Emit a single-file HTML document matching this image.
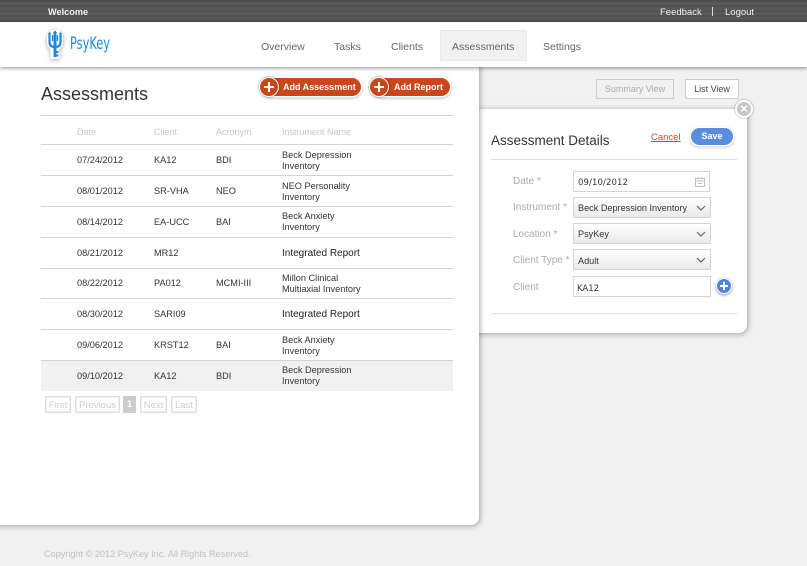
<!DOCTYPE html>
<html><head><meta charset="utf-8"><style>
html,body{margin:0;padding:0}
body{width:807px;height:566px;overflow:hidden;background:#f1f1f1;font-family:"Liberation Sans",sans-serif;position:relative}
.a{position:absolute;white-space:nowrap}
#top{left:0;top:0;width:807px;height:22px;background:repeating-linear-gradient(180deg,#505050 0,#505050 2px,#595959 2px,#595959 5px)}
#nav{left:0;top:22px;width:807px;height:45px;background:#fff;box-shadow:0 1px 4px rgba(0,0,0,.45);z-index:5}
.n{font-size:10.500px;color:#666;top:41px;line-height:13px;z-index:6}
.t{font-size:9.500px;line-height:11px;color:#f0f0f0;top:7px}
#main{left:-10px;top:60px;width:489px;height:465px;background:#fff;border-radius:0 0 8px 0;box-shadow:1px 1px 6px rgba(0,0,0,.35);z-index:3}
#det{left:470px;top:109px;width:277px;height:224px;background:#fff;border-radius:0 0 8px 0;box-shadow:1px 1px 6px rgba(0,0,0,.35);z-index:2}
.l{background:#d4d4d4;height:1px;left:41px;width:412px;z-index:4}
.c{font-size:9.200px;line-height:10.500px;color:#333;z-index:4}
.r{font-size:10px;color:#222}
.h{font-size:9px;line-height:11px;color:#c6c6c6;top:127px;z-index:4}
.b{height:18px;border-radius:9px;background:#c9471a;color:#fff;font-weight:bold;font-size:9px;line-height:18px;top:78px;z-index:4;box-shadow:0 0 0 1.500px #fff,0 1px 3px 1px rgba(0,0,0,.35)}
.o{width:18px;height:18px;border-radius:50%;background:#c9471a;border:1.500px solid #fff;top:77px;z-index:4;color:#fff;box-shadow:0 0 2px rgba(0,0,0,.5)}
.o:before{content:"";position:absolute;left:4px;top:8px;width:10px;height:2px;background:#fff}
.o:after{content:"";position:absolute;left:8px;top:4px;width:2px;height:10px;background:#fff}
.p{box-sizing:border-box;font-size:9.500px;line-height:17px;height:17px;border:1px solid #ddd;box-shadow:inset 0 0 0 1px #f0f0f0;color:#ccc;top:396px;z-index:4;text-align:center}
.f{font-size:10px;line-height:12px;color:#aaa;left:513px;z-index:4}
.s{left:573px;width:135px;height:19px;border:1px solid #d5d5d5;background:linear-gradient(#fff,#e9e9e9);z-index:4;font-size:9.150px;line-height:21px;color:#333;padding-left:4px;border-radius:1px}
.s svg{position:absolute;right:3px;top:4px}
.i{background:#fff}
</style></head><body>
<div class="a" id="top"></div>
<div class="a t" style="left:48px;font-weight:bold;font-size:9.200px">Welcome</div>
<div class="a t" style="left:660px">Feedback</div>
<div class="a" style="left:712px;top:7px;width:1px;height:9px;background:#ddd"></div>
<div class="a t" style="left:725px">Logout</div>
<div class="a" id="nav"></div>
<svg class="a" style="left:44px;top:29px;z-index:6;filter:drop-shadow(0 1px 2px rgba(0,0,0,.35))" width="22" height="32" viewBox="0 0 22 32"><path d="M11 1 L11 30" stroke="#fff" stroke-width="9"/><path d="M3 13 Q3 21 11 21 Q19 21 19 13 L19 5 L3 5Z" fill="#fff"/><path d="M5.500 4 L5.500 13 Q5.500 18 11 18 Q16.500 18 16.500 13 L16.500 4" fill="none" stroke="#1e88e0" stroke-width="2.200"/><path d="M8.500 6 L8.500 12 M13.500 6 L13.500 12" fill="none" stroke="#1e88e0" stroke-width="1.300"/><path d="M9 3.500 L11 1.500 L13 3.500Z M4 5 L5.500 3 L7 5Z M15 5 L16.500 3 L18 5Z" fill="#1e88e0"/><rect x="9.500" y="3" width="3" height="25" fill="#1e88e0"/><rect x="12" y="22" width="2.500" height="2" fill="#1e88e0"/><rect x="12" y="25.500" width="2.500" height="2" fill="#1e88e0"/></svg>
<div class="a" style="left:70px;top:34px;z-index:6;font-size:17px;line-height:20px;color:#2288dd;transform:scaleX(.67);transform-origin:0 0;font-family:'DejaVu Sans',sans-serif">PsyKey</div>
<div class="a" style="left:440px;top:30px;width:85px;height:29px;background:#f1f1f1;border:1px solid #e8e8e8;z-index:6"></div>
<div class="a n" style="left:261px">Overview</div>
<div class="a n" style="left:334px">Tasks</div>
<div class="a n" style="left:391px">Clients</div>
<div class="a n" style="left:452px">Assessments</div>
<div class="a n" style="left:543px">Settings</div>

<div class="a" id="main"></div>
<div class="a" style="left:41px;top:82px;font-size:18px;line-height:24px;color:#333;z-index:4">Assessments</div>
<div class="a b" style="left:262px;width:77px;padding-left:22px;text-indent:-1px">Add Assessment</div>
<div class="a o" style="left:259px"></div>
<div class="a b" style="left:372px;width:54px;padding-left:24px;text-indent:-2px">Add Report</div>
<div class="a o" style="left:369px"></div>

<div class="a l" style="top:115px"></div>
<div class="a h" style="left:77px">Date</div><div class="a h" style="left:154px">Client</div><div class="a h" style="left:216px">Acronym</div><div class="a h" style="left:282px">Instrument Name</div>
<div class="a l" style="top:144px"></div><div class="a l" style="top:175px"></div><div class="a l" style="top:206px"></div><div class="a l" style="top:237px"></div><div class="a l" style="top:268px"></div><div class="a l" style="top:298px"></div><div class="a l" style="top:329px"></div><div class="a l" style="top:360px"></div>
<div class="a" style="left:41px;top:361px;width:412px;height:30px;background:#f1f1f1;z-index:3"></div>

<div class="a c" style="left:77px;top:155px">07/24/2012</div><div class="a c" style="left:154px;top:155px">KA12</div><div class="a c" style="left:216px;top:155px">BDI</div><div class="a c" style="left:282px;top:150px">Beck Depression<br>Inventory</div>
<div class="a c" style="left:77px;top:186px">08/01/2012</div><div class="a c" style="left:154px;top:186px">SR-VHA</div><div class="a c" style="left:216px;top:186px">NEO</div><div class="a c" style="left:282px;top:181px">NEO Personality<br>Inventory</div>
<div class="a c" style="left:77px;top:217px">08/14/2012</div><div class="a c" style="left:154px;top:217px">EA-UCC</div><div class="a c" style="left:216px;top:217px">BAI</div><div class="a c" style="left:282px;top:211px">Beck Anxiety<br>Inventory</div>
<div class="a c" style="left:77px;top:248px">08/21/2012</div><div class="a c" style="left:154px;top:248px">MR12</div><div class="a c r" style="left:282px;top:249px">Integrated Report</div>
<div class="a c" style="left:77px;top:278px">08/22/2012</div><div class="a c" style="left:154px;top:278px">PA012</div><div class="a c" style="left:216px;top:278px">MCMI-III</div><div class="a c" style="left:282px;top:273px">Millon Clinical<br>Multiaxial Inventory</div>
<div class="a c" style="left:77px;top:309px">08/30/2012</div><div class="a c" style="left:154px;top:309px">SARI09</div><div class="a c r" style="left:282px;top:310px">Integrated Report</div>
<div class="a c" style="left:77px;top:340px">09/06/2012</div><div class="a c" style="left:154px;top:340px">KRST12</div><div class="a c" style="left:216px;top:340px">BAI</div><div class="a c" style="left:282px;top:335px">Beck Anxiety<br>Inventory</div>
<div class="a c" style="left:77px;top:371px">09/10/2012</div><div class="a c" style="left:154px;top:371px">KA12</div><div class="a c" style="left:216px;top:371px">BDI</div><div class="a c" style="left:282px;top:365px">Beck Depression<br>Inventory</div>

<div class="a p" style="left:45px;width:26px">First</div>
<div class="a p" style="left:75px;width:45px">Previous</div>
<div class="a p" style="left:123px;width:13px;background:#ccc;color:#fff;border:0;box-shadow:none;font-weight:bold;line-height:18px">1</div>
<div class="a p" style="left:140px;width:27px">Next</div>
<div class="a p" style="left:171px;width:26px">Last</div>

<div class="a" id="det"></div>
<div class="a" style="left:596px;top:79px;width:76px;height:18px;border:1px solid #ccc;font-size:9px;line-height:18px;text-align:center;color:#aaa;z-index:1">Summary View</div>
<div class="a" style="left:685px;top:79px;width:52px;height:18px;border:1px solid #ccc;background:#fff;font-size:9px;line-height:18px;text-align:center;color:#444;z-index:1">List View</div>
<div class="a" style="left:735px;top:100px;width:14px;height:14px;border-radius:50%;background:#c8c8c8;border:2px solid #fff;box-shadow:0 0 2px rgba(0,0,0,.4);z-index:4;color:#fff;font-size:13px;line-height:14px;text-align:center;font-weight:bold">×</div>
<div class="a" style="left:491px;top:132px;font-size:13.500px;line-height:17px;color:#333;z-index:4">Assessment Details</div>
<div class="a" style="left:651px;top:132px;font-size:9.500px;line-height:12px;color:#c5481c;text-decoration:underline;z-index:4">Cancel</div>
<div class="a" style="left:691px;top:128px;width:42px;height:17px;border-radius:9px;background:#5b8ddd;color:#fff;font-weight:bold;font-size:9px;line-height:16px;text-align:center;box-shadow:0 0 0 1.500px #fff,0 1px 3px 1px rgba(0,0,0,.3);z-index:4">Save</div>
<div class="a" style="left:491px;top:159px;width:246px;height:1px;background:#ddd;z-index:4"></div>

<div class="a f" style="top:176px">Date *</div>
<div class="a f" style="top:202px">Instrument *</div>
<div class="a f" style="top:229px">Location *</div>
<div class="a f" style="top:255px">Client Type *</div>
<div class="a f" style="top:282px">Client</div>
<div class="a s i" style="width:131px;padding-left:4px;height:19px;top:171px;font-family:'DejaVu Sans',sans-serif;font-size:8.500px;letter-spacing:.1px;line-height:23px">09/10/2012<svg style="top:4px;right:3px" width="12" height="12" viewBox="0 0 12 12"><path d="M1.500 2.500H10.500V10.500H1.500Z M1.500 5H10.500" fill="none" stroke="#bbb"/><path d="M4 1V3M8 1V3M4 7.500H8" stroke="#bbb"/></svg></div>
<div class="a s" style="top:197px;width:132px;height:19px;line-height:20px">Beck Depression Inventory<svg width="12" height="12" viewBox="0 0 12 12"><path d="M2 4L6 8L10 4" fill="none" stroke="#666" stroke-width="1.200"/></svg></div>
<div class="a s" style="top:223px;width:132px;height:19px">PsyKey<svg width="12" height="12" viewBox="0 0 12 12"><path d="M2 4L6 8L10 4" fill="none" stroke="#666" stroke-width="1.200"/></svg></div>
<div class="a s" style="top:249px;width:132px;height:19px;line-height:22px">Adult<svg width="12" height="12" viewBox="0 0 12 12"><path d="M2 4L6 8L10 4" fill="none" stroke="#666" stroke-width="1.200"/></svg></div>
<div class="a s i" style="top:276px;width:133px;padding-left:3px;height:19px;line-height:25px;font-family:'DejaVu Sans',sans-serif;font-size:8.500px">KA12</div>
<div class="a" style="left:716px;top:278px;width:14px;height:14px;border-radius:50%;background:#4f84dc;border:1px solid #fff;box-shadow:0 1px 3px rgba(0,0,0,.45);z-index:4"><div class="a" style="left:3px;top:6px;width:8px;height:2px;background:#fff"></div><div class="a" style="left:6px;top:3px;width:2px;height:8px;background:#fff"></div></div>
<div class="a" style="left:491px;top:313px;width:246px;height:1px;background:#ddd;z-index:4"></div>

<div class="a" style="left:44px;top:548px;font-size:9.150px;line-height:12px;color:#c0c0c0">Copyright © 2012 PsyKey Inc. All Rights Reserved.</div>
</body></html>
